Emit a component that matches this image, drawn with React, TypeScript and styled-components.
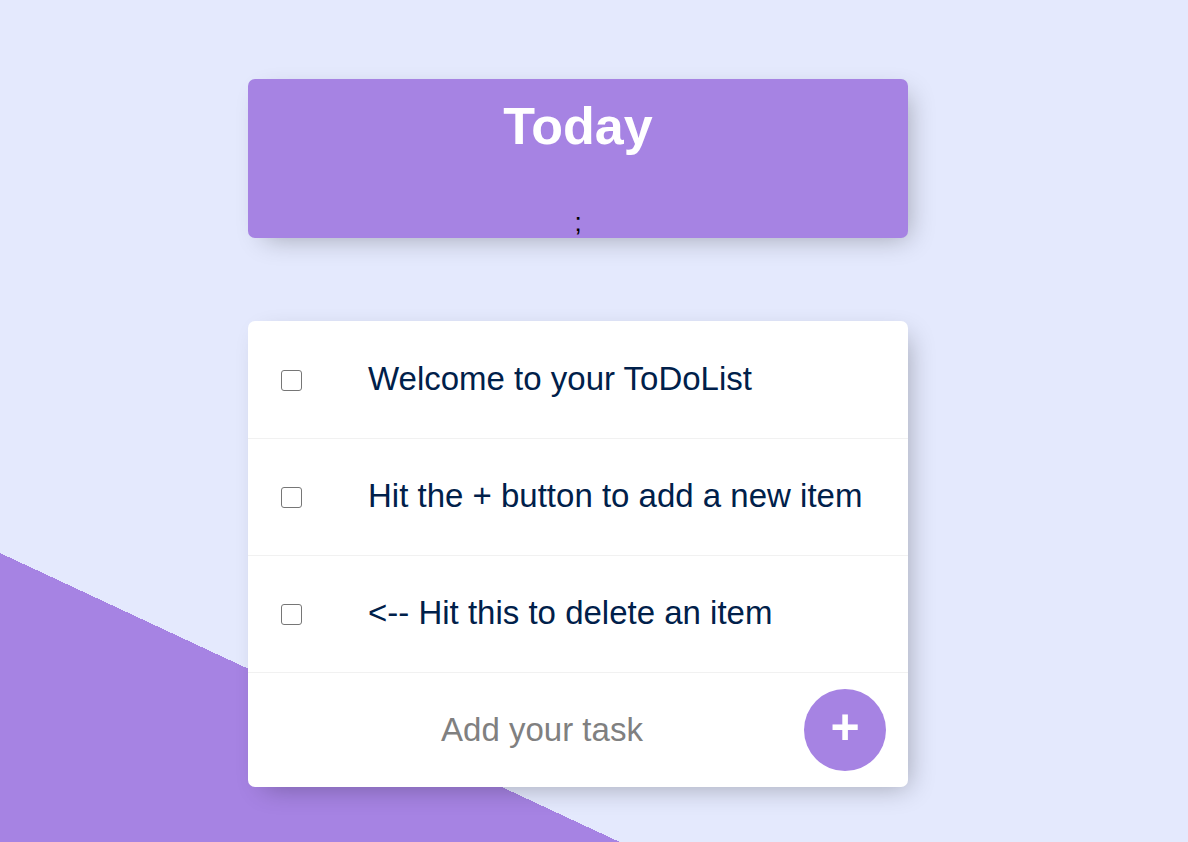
import { ReactElement } from "react";
import styled, { createGlobalStyle } from "styled-components";

const GlobalStyle = createGlobalStyle`
  html, body {
    margin: 0;
    padding: 0;
  }

  body {
    font-family: "Liberation Sans", Arial, sans-serif;
  }
`;

const Page = styled.div`
  display: flex;
  flex-direction: column;
  align-items: center;
  gap: 83px;
  height: 100vh;
  padding: 79px 32px 0 0;
  box-sizing: border-box;
  overflow: hidden;
  background-color: #e4e9fd;
  background-image: linear-gradient(25deg, #a683e3 50%, #e4e9fd 50%);
  background-size: 1188px 1660px;
  background-repeat: no-repeat;
`;

const Box = styled.div`
  flex: none;
  width: 660px;
  background: #ffffff;
  border-radius: 7px;
  box-shadow: 8px 8px 25px -8px rgba(0, 0, 0, 0.3);
  overflow: hidden;
`;

const Heading = styled(Box)`
  background: #a683e3;
  text-align: center;
  height: 159px;
`;

const Title = styled.h1`
  margin: 0 0 35px;
  padding: 16.5px;
  font-size: 52px;
  line-height: 60px;
  font-weight: 700;
  color: #ffffff;
`;

const Stray = styled.div`
  font-size: 26px;
  line-height: 30px;
  color: #000000;
`;

const Item = styled.div`
  display: flex;
  align-items: center;
  min-height: 116px;
  border-bottom: 1px solid #f1f1f1;

  &:first-child {
    padding-top: 1px;
  }
`;

const Check = styled.input`
  appearance: none;
  flex: none;
  width: 21px;
  height: 21px;
  margin: 0 33px;
  border: 1.5px solid #767676;
  border-radius: 3px;
  background: #ffffff;
  box-sizing: border-box;
`;

const ItemText = styled.p`
  margin: 0 0 2px;
  padding: 0 33px;
  font-size: 33px;
  color: #00204a;
`;

const AddForm = styled.form`
  display: flex;
  align-items: center;
  height: 114px;
  padding-left: 36px;
  gap: 4px;
`;

const TaskInput = styled.input`
  width: 516px;
  height: 99px;
  border: none;
  padding: 0;
  background: transparent;
  text-align: center;
  font-family: "Liberation Sans", Arial, sans-serif;
  font-size: 33px;
  color: #00204a;

  &::placeholder {
    color: grey;
    opacity: 1;
  }

  &:focus {
    outline: none;
  }
`;

const AddButton = styled.button`
  width: 82px;
  height: 82px;
  border: 0;
  border-radius: 50%;
  background: #a683e3;
  color: #ffffff;
  font-family: "Liberation Sans", Arial, sans-serif;
  font-size: 50px;
  font-weight: 700;
  line-height: 1;
  padding: 0 0 6px;
`;

const items = [
  "Welcome to your ToDoList",
  "Hit the + button to add a new item",
  "<-- Hit this to delete an item",
];

function App(): ReactElement {
  return (
    <Page>
      <GlobalStyle />
      <Heading>
        <Title>Today</Title>
        <Stray>;</Stray>
      </Heading>
      <Box>
        {items.map((text) => (
          <Item key={text}>
            <Check type="checkbox" />
            <ItemText>{text}</ItemText>
          </Item>
        ))}
        <AddForm onSubmit={(e) => e.preventDefault()}>
          <TaskInput type="text" placeholder="Add your task" />
          <AddButton type="submit">+</AddButton>
        </AddForm>
      </Box>
    </Page>
  );
}

export default App;
